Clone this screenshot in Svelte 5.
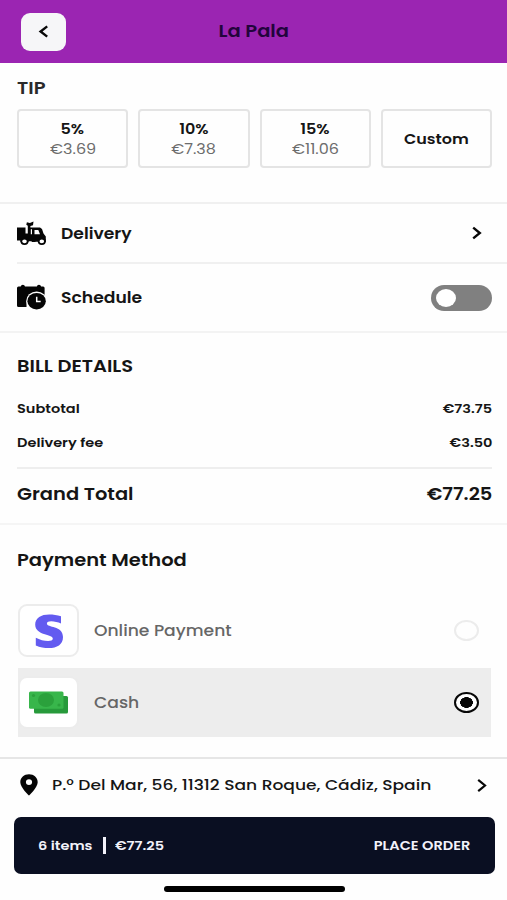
<script lang="ts">
  type Tip = { label: string; amount?: string };

  const tips: Tip[] = [
    { label: '5%', amount: '€3.69' },
    { label: '10%', amount: '€7.38' },
    { label: '15%', amount: '€11.06' },
    { label: 'Custom' },
  ];

  let schedule = $state(false);
  let payment = $state('cash');
</script>

<div class="screen">
  <header>
    <button class="back" aria-label="Back">
      <svg width="12" height="14" viewBox="0 0 12 14">
        <path d="M9.200 1.400 2.600 6.500l6.600 5.100" fill="none" stroke="#080808" stroke-width="2.400" />
      </svg>
    </button>
    <h1><span class="t">La Pala</span></h1>
  </header>

  <section class="tip">
    <h2><span class="t">TIP</span></h2>
    <div class="tips">
      {#each tips as tip}
        <button class="tip-card">
          <b class="t" class:custom={!tip.amount}>{tip.label}</b>
          {#if tip.amount}<span class="t amount">{tip.amount}</span>{/if}
        </button>
      {/each}
    </div>
  </section>

  <section class="options">
    <div class="option delivery">
      <svg class="icon" width="29" height="24" viewBox="0 0 29 24">
        <path d="M0 6.500h8.500v6h2.300V4.800L9.300 3.800l.6-2.500 3 .7L16.500.5l-.5 3.800-2.600.6v1.600H23l2 1.500 1.500 4.500 2.300 3V21H0z" fill="#050505" />
        <path d="M13.800 8.300h1.200v5h-1.200zM17.500 9h3.800l1.700 4.300h-5.500z" fill="#fff" />
        <path d="M0 19.500h3.500V22H0zM11.500 20.200h3.200V22h-3.200zM18.500 20.800h3V22h-3z" fill="#fefefe" />
        <ellipse cx="7.500" cy="20.300" rx="3.200" ry="2.800" fill="#fff" stroke="#050505" stroke-width="1.800" />
        <ellipse cx="24.800" cy="20.300" rx="3.200" ry="2.800" fill="#fff" stroke="#050505" stroke-width="1.800" />
      </svg>
      <span class="t name">Delivery</span>
      <svg class="chevron" width="12" height="14" viewBox="0 0 12 14">
        <path d="M2.200 1.600 8.800 7l-6.600 5.400" fill="none" stroke="#080808" stroke-width="2.400" />
      </svg>
    </div>
    <div class="option">
      <svg class="icon" width="29" height="26" viewBox="0 0 29 26">
        <path d="M1.500 2.500H3.700a2.200 2.300 0 0 1 4.300 0h11.800a2.200 2.300 0 0 1 4.300 0h2A1.500 1.500 0 0 1 27.600 4v19H1.500A1.500 1.500 0 0 1 0 21.500V4a1.500 1.500 0 0 1 1.500-1.500z" fill="#050505" />
        <path d="M9.500 17h18.100v8H9.500z" fill="#fefefe" />
        <ellipse cx="19.600" cy="17" rx="10.400" ry="9.500" fill="#fefefe" />
        <ellipse cx="19.600" cy="17.200" rx="9.200" ry="8.300" fill="#050505" />
        <path d="M19.700 12.700v4.900h4" fill="none" stroke="#fff" stroke-width="1.500" />
      </svg>
      <span class="t name">Schedule</span>
      <button
        class="switch"
        class:on={schedule}
        aria-label="Schedule"
        onclick={() => (schedule = !schedule)}
      ><i></i></button>
    </div>
  </section>

  <section class="bill">
    <h2><span class="t">BILL DETAILS</span></h2>
    <div class="line"><span class="t">Subtotal</span><span class="t end">€73.75</span></div>
    <div class="line"><span class="t">Delivery fee</span><span class="t end">€3.50</span></div>
    <div class="line total"><span class="t">Grand Total</span><span class="t end">€77.25</span></div>
  </section>

  <section class="payment">
    <h2><span class="t">Payment Method</span></h2>
    <button class="method" class:selected={payment === 'online'} onclick={() => (payment = 'online')}>
      <span class="logo">
        <svg width="28" height="34" viewBox="0 0 28 34">
          <path d="M26 2.200v7.400C23 8.200 19.500 7.300 16.200 7.300c-2.500 0-4.300.7-4.300 2.200 0 4.500 16.100 1.800 16.100 13.400C28 30.500 22 34 13.800 34 9.500 34 4.800 33.200.8 31.400v-7.600c3.800 2 8.400 3.300 12.300 3.300 2.800 0 4.700-.7 4.700-2.500C17.800 19.900.2 22 .2 10.600.2 3.700 6.200.4 14.200.4 18.200.4 22.200.9 26 2.200z" fill="#635bf0" />
        </svg>
      </span>
      <span class="t">Online Payment</span>
      <i class="radio"></i>
    </button>
    <button class="method" class:selected={payment === 'cash'} onclick={() => (payment = 'cash')}>
      <span class="logo">
        <svg width="40" height="23" viewBox="0 0 40 23">
          <rect x="5" y="5" width="34" height="17.500" rx="1.500" fill="#279a3b" />
          <rect x="0" y="0.500" width="34.500" height="17.300" rx="1.500" fill="#38b64b" />
          <ellipse cx="17" cy="9" rx="8" ry="7" fill="#2ba13c" />
          <circle cx="4.500" cy="4.500" r="1.600" fill="#2ba13c" />
          <circle cx="30" cy="14" r="1.600" fill="#2ba13c" />
        </svg>
      </span>
      <span class="t">Cash</span>
      <i class="radio"></i>
    </button>
  </section>

  <footer>
    <div class="address">
      <svg class="pin" width="18" height="22" viewBox="0 0 18 22">
        <path d="M9 .3C4.100.300.300 3.700.300 8.200.300 13.500 9 21.500 9 21.500s8.700-8 8.700-13.300C17.700 3.700 13.900.300 9 .300zm0 4.900a3.100 2.900 0 1 1 0 5.800 3.100 2.900 0 0 1 0-5.800z" fill="#050505" />
      </svg>
      <span class="t">P.º Del Mar, 56, 11312 San Roque, Cádiz, Spain</span>
      <svg class="chevron" width="12" height="14" viewBox="0 0 12 14">
        <path d="M2.200 1.900 9 7.500l-6.800 5.600" fill="none" stroke="#080808" stroke-width="2.200" />
      </svg>
    </div>
    <button class="order">
      <span class="t count">6 items</span>
      <i class="bar"></i>
      <span class="t">€77.25</span>
      <span class="t end">PLACE ORDER</span>
    </button>
    <div class="home"></div>
  </footer>
</div>

<style>
  :global(body) {
    background: #fefefe;
  }
  .screen {
    width: 507px;
    height: 900px;
    overflow: hidden;
    display: flex;
    flex-direction: column;
    font-family: Poppins, Inter, sans-serif;
    font-weight: 600;
    color: #151515;
  }
  .screen * {
    box-sizing: border-box;
  }
  button {
    font: inherit;
    color: inherit;
    border: 0;
    padding: 0;
    background: none;
  }
  h1,
  h2 {
    margin: 0;
    font-size: 17px;
    font-weight: 600;
    line-height: 24px;
  }
  svg {
    display: block;
    flex: none;
  }
  /* extended letterforms */
  .t {
    display: inline-block;
    white-space: nowrap;
    transform: scaleX(1.145);
    transform-origin: left;
  }
  .t.end {
    margin-left: auto;
    transform-origin: right;
  }
  header {
    height: 63px;
    flex: none;
    display: grid;
    grid-template-columns: 88px 1fr 88px;
    align-items: center;
    background: #9b25b2;
  }
  header h1 {
    text-align: center;
    color: #22043c;
    line-height: 61px;
  }
  header .t,
  .tip-card .t {
    transform-origin: center;
  }
  .back {
    width: 45px;
    height: 38px;
    margin-left: 21px;
    display: flex;
    align-items: center;
    justify-content: center;
    border-radius: 9px;
    background: #f6f6f8;
  }
  .tip {
    height: 139px;
    padding: 13px 15px 0 17px;
  }
  .tip h2 {
    color: #2a2a2a;
  }
  .tips {
    display: grid;
    grid-template-columns: repeat(4, 1fr);
    gap: 10px;
    margin-top: 9px;
  }
  .tip-card {
    height: 59px;
    display: flex;
    flex-direction: column;
    align-items: center;
    justify-content: center;
    border: 2px solid #e4e4e4;
    border-radius: 4px;
    font-size: 14px;
    line-height: 20px;
  }
  .tip-card b {
    font-weight: 600;
  }
  .tip-card .custom {
    font-size: 14px;
  }
  .amount {
    font-weight: 400;
    color: #6c6c6c;
  }
  .options {
    height: 131px;
    border-top: 2px solid #f0f0f0;
    border-bottom: 2px solid #f3f3f3;
    padding-left: 17px;
  }
  .option {
    height: 66px;
    display: flex;
    align-items: center;
    font-size: 15px;
  }
  .option.delivery {
    height: 60px;
    border-bottom: 2px solid #f0f0f0;
  }
  .name {
    margin-left: 15px;
  }
  .option .chevron {
    margin: 0 24px 0 auto;
  }
  .switch {
    width: 61px;
    height: 26px;
    margin: 1px 15px 0 auto;
    padding: 4px 5px;
    border-radius: 13px;
    background: #808080;
  }
  .switch i {
    display: block;
    width: 20px;
    height: 18px;
    border-radius: 50%;
    background: #fff;
  }
  .switch.on i {
    margin-left: auto;
  }
  .bill {
    height: 192px;
    padding: 21px 15px 0 17px;
    border-bottom: 2px solid #f5f5f5;
  }
  .line {
    display: flex;
    align-items: center;
    height: 34px;
    font-size: 12.7px;
  }
  .bill h2 + .line {
    margin-top: 14px;
  }
  .line.total {
    height: 51px;
    margin-top: 7px;
    border-top: 2px solid #eee;
    font-size: 17px;
  }
  .payment {
    height: 232px;
    padding: 23px 16px 0 17px;
  }
  .method {
    display: flex;
    align-items: center;
    width: 473px;
    height: 69px;
    margin-left: 1px;
    font-size: 15px;
    font-weight: 500;
    color: #666;
  }
  .payment h2 + .method {
    margin: 24px 0 3px 1px;
  }
  .selected {
    background: #ededed;
  }
  .logo {
    width: 61px;
    height: 53px;
    margin-right: 15px;
    display: flex;
    align-items: center;
    justify-content: center;
    border: 2px solid #ececec;
    border-radius: 9px;
    background: #fff;
  }
  .radio {
    width: 25px;
    height: 21px;
    margin: 0 12px 0 auto;
    border: 2px solid #ececec;
    border-radius: 50%;
  }
  .selected .radio {
    border-color: #080808;
    background: radial-gradient(6.500px 5.500px, #080808 94%, #fff);
  }
  footer {
    border-top: 2px solid #e6e6e6;
    padding: 0 12px 0 14px;
  }
  .address {
    display: flex;
    align-items: center;
    height: 52px;
    padding: 0 7px 0 6px;
    font-size: 14.950px;
    font-weight: 500;
  }
  .address .t {
    margin-left: 14px;
  }
  .address .chevron {
    margin-left: auto;
  }
  .order {
    display: flex;
    align-items: center;
    width: 481px;
    height: 57px;
    margin-top: 6px;
    padding: 0 25px 0 24px;
    border-radius: 7px;
    background: #0a0f22;
    color: #f2f2fa;
    font-size: 12.700px;
  }
  .count {
    width: 65px;
    text-align: left;
  }
  .bar {
    width: 3px;
    height: 17px;
    margin-right: 9px;
    background: #f2f2fa;
  }
  .home {
    width: 181px;
    height: 6px;
    margin: 12px 0 0 150px;
    border-radius: 3px;
    background: #000;
  }
</style>
